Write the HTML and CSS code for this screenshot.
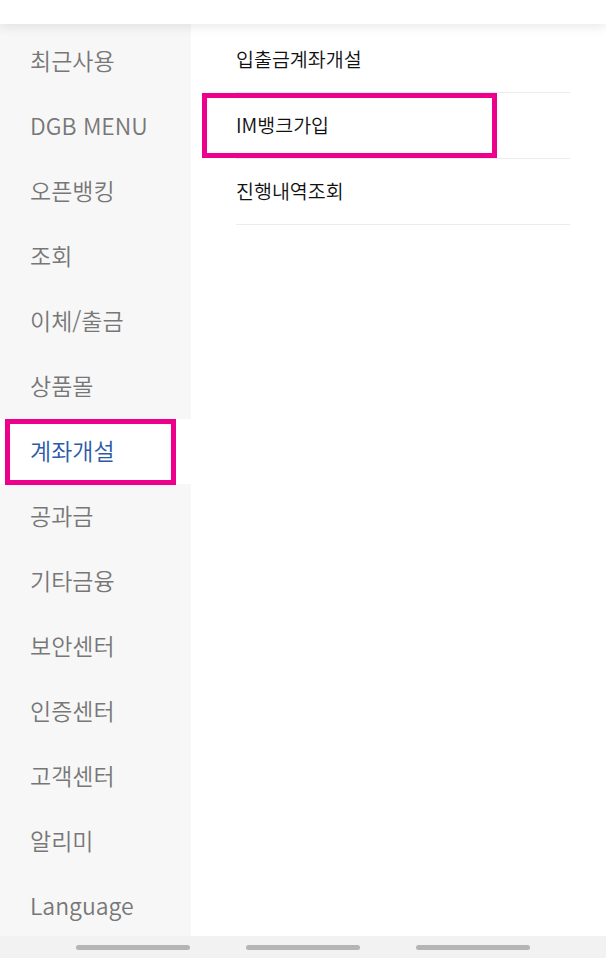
FILE: index.html
```html
<!doctype html>
<html lang="ko">
<head>
<meta charset="UTF-8">
<title>전체메뉴</title>
<link rel="stylesheet" href="styles.css">
</head>
<body>
<div class="topBar"></div>
<div id="main">
  <ul class="sideMenu">
    <li>최근사용</li>
    <li>DGB MENU</li>
    <li>오픈뱅킹</li>
    <li>조회</li>
    <li>이체/출금</li>
    <li>상품몰</li>
    <li class="on">계좌개설</li>
    <li>공과금</li>
    <li>기타금융</li>
    <li>보안센터</li>
    <li>인증센터</li>
    <li>고객센터</li>
    <li>알리미</li>
    <li>Language</li>
  </ul>
  <ul class="subMenu">
    <li>입출금계좌개설</li>
    <li class="mark">IM뱅크가입</li>
    <li>진행내역조회</li>
  </ul>
</div>
<div class="navBar">
  <span class="pill"></span>
  <span class="pill"></span>
  <span class="pill"></span>
</div>
</body>
</html>
```
FILE: styles.css
```css
html, body {
	margin: 0;
	padding: 0;
	background: #fff;
}
body {
	width: 606px;
	height: 958px;
	overflow: hidden;
	font-family: "Noto Sans CJK KR", "Noto Sans", sans-serif;
}
ul {
	list-style: none;
	margin: 0;
	padding: 0;
}
.topBar {
	position: relative;
	z-index: 2;
	height: 24px;
	background: #fff;
	box-shadow: 0 3px 12px rgba(0, 0, 0, 0.09);
}
#main {
	display: flex;
	height: 912px;
	overflow: hidden;
}
.sideMenu {
	width: 191px;
	flex: none;
	padding-top: 5px;
	background: #f7f7f7;
}
.sideMenu li {
	position: relative;
	height: 65px;
	line-height: 63px;
	padding-left: 30px;
	font-size: 23px;
	font-weight: 350;
	color: #777;
}
.sideMenu li.on {
	background: #fff;
	color: #2b5ba8;
}
.sideMenu li.on::after {
	content: "";
	position: absolute;
	left: 5px;
	top: 0;
	width: 171px;
	height: 66px;
	border: 5px solid #ec008c;
	box-sizing: border-box;
}
.subMenu {
	flex: 1;
	padding: 3px 36px 0 45px;
}
.subMenu li {
	position: relative;
	height: 65px;
	line-height: 63px;
	border-bottom: 1px solid #ececec;
	font-size: 19.5px;
	font-weight: 350;
	color: #111;
}
.subMenu li.mark::after {
	content: "";
	position: absolute;
	left: -34px;
	top: 0;
	width: 295px;
	height: 65px;
	border: 5px solid #ec008c;
	box-sizing: border-box;
}
.navBar {
	display: flex;
	justify-content: center;
	align-items: center;
	gap: 56px;
	height: 22px;
	background: #f2f2f2;
}
.pill {
	width: 114px;
	height: 5px;
	border-radius: 3px;
	background: #b5b5b5;
}
```
